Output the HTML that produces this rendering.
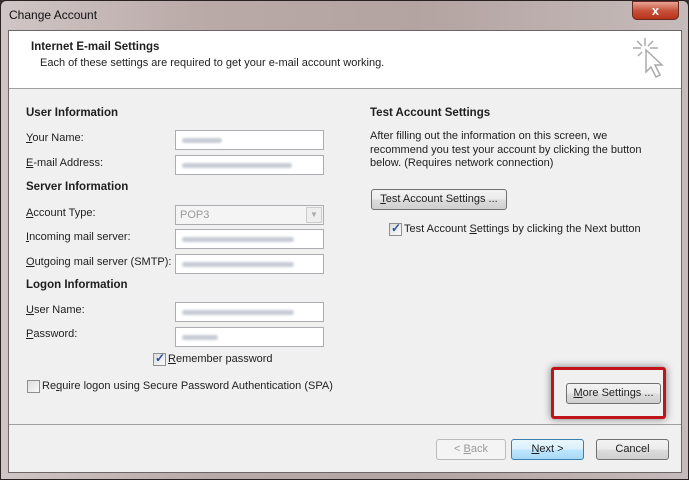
<!DOCTYPE html>
<html><head><style>
*{margin:0;padding:0;box-sizing:border-box}
body{width:689px;height:480px;overflow:hidden;background:#3a3232;font-family:"Liberation Sans",sans-serif;font-size:11px;color:#1e1e1e;position:relative}
.a{position:absolute}
.title{left:0;top:0;width:689px;height:480px;background:linear-gradient(90deg,#cfc6c5 0%,#b9a9a7 30%,#b3a3a1 60%,#c5bbba 100%);border:1px solid #2a2222;border-radius:6px 6px 0 0}
.inner{left:8px;top:30px;width:674px;height:443px;background:#f0f0f0;border:1px solid #6d6666}
.head{left:9px;top:31px;width:672px;height:58px;background:#fff;border-bottom:1px solid #a0a0a0}
.inp{position:absolute;left:175px;width:149px;height:20px;background:#fff;border:1px solid #abadb3}
.blur{position:absolute;left:6px;top:7px;height:5px;background:#c8ccd4;border-radius:3px;filter:blur(1px)}
.lab{position:absolute;left:26px}
.h{position:absolute;font-weight:bold;font-size:11.5px}
.btn{position:absolute;height:21px;border:1px solid #707070;border-radius:3px;background:linear-gradient(#f2f2f2,#ebebeb 50%,#dddddd 51%,#cfcfcf);text-align:center;line-height:19px}
.cb{position:absolute;width:13px;height:13px;border:1px solid #8f8f8f;background:linear-gradient(135deg,#dcdcdc,#fafafa)}
.ck{position:absolute;left:1px;top:-3px;color:#2a4f9c;font-size:12px;font-weight:bold}
u{text-decoration:underline}
</style></head><body>
<div class="a title"></div>
<div class="a" style="left:9px;top:8px;font-size:12px;color:#111">Change Account</div>
<div class="a" style="left:632px;top:1px;width:47px;height:19px;border-radius:0 0 5px 5px;background:linear-gradient(#e8a595,#c7533c 50%,#b8321a);border:1px solid #6b2a20;color:#fff;font-weight:bold;text-align:center;font-size:13px;line-height:17px">x</div>
<div class="a inner"></div>
<div class="a head"></div>
<div class="a" style="left:31px;top:41px;font-weight:bold;font-size:11.5px">Internet E-mail Settings</div>
<div class="a" style="left:40px;top:57px">Each of these settings are required to get your e-mail account working.</div>
<svg class="a" style="left:630px;top:36px" width="40" height="50"><g stroke="#aaa" stroke-width="1.5" fill="none"><path d="M15 2v8M3 12h8M20 12h8M7 5l5 5M23 5l-5 5M8 20l4-4"/><path d="M16 14l0 22 5-5 5 10 4-2-5-10 7 0z" fill="#fff"/></g></svg>

<div class="h" style="left:26px;top:107px">User Information</div>
<div class="lab" style="top:132px"><u>Y</u>our Name:</div>
<div class="inp" style="top:130px"><div class="blur" style="width:40px"></div></div>
<div class="lab" style="top:157px"><u>E</u>-mail Address:</div>
<div class="inp" style="top:155px"><div class="blur" style="width:110px"></div></div>
<div class="h" style="left:26px;top:181px">Server Information</div>
<div class="lab" style="top:207px"><u>A</u>ccount Type:</div>
<div class="inp" style="top:205px;background:#f4f4f4;color:#999;padding:3px 0 0 4px">POP3<div style="position:absolute;right:1px;top:1px;width:16px;height:16px;border:1px solid #ccc;background:#eee;font-size:8px;text-align:center;line-height:14px;color:#aaa">▼</div></div>
<div class="lab" style="top:231px"><u>I</u>ncoming mail server:</div>
<div class="inp" style="top:229px"><div class="blur" style="width:112px"></div></div>
<div class="lab" style="top:256px"><u>O</u>utgoing mail server (SMTP):</div>
<div class="inp" style="top:254px"><div class="blur" style="width:112px"></div></div>
<div class="h" style="left:26px;top:279px">Logon Information</div>
<div class="lab" style="top:304px"><u>U</u>ser Name:</div>
<div class="inp" style="top:302px"><div class="blur" style="width:112px"></div></div>
<div class="lab" style="top:328px"><u>P</u>assword:</div>
<div class="inp" style="top:327px"><div class="blur" style="width:36px"></div></div>
<div class="cb" style="left:153px;top:353px"><span class="ck">✓</span></div>
<div class="a" style="left:168px;top:353px"><u>R</u>emember password</div>
<div class="cb" style="left:27px;top:380px"></div>
<div class="a" style="left:42px;top:380px">Re<u>q</u>uire logon using Secure Password Authentication (SPA)</div>

<div class="h" style="left:370px;top:107px">Test Account Settings</div>
<div class="a" style="left:370px;top:130px;line-height:13.5px">After filling out the information on this screen, we<br>recommend you test your account by clicking the button<br>below. (Requires network connection)</div>
<div class="btn" style="left:371px;top:189px;width:136px"><u>T</u>est Account Settings ...</div>
<div class="cb" style="left:389px;top:223px"><span class="ck">✓</span></div>
<div class="a" style="left:404px;top:223px">Test Account <u>S</u>ettings by clicking the Next button</div>

<div class="a" style="left:551px;top:367px;width:115px;height:52px;border:3px solid #c0141a;border-radius:3px;box-shadow:0 0 8px rgba(0,0,0,.5);background:#f0f0f0"></div>
<div class="btn" style="left:566px;top:383px;width:95px"><u>M</u>ore Settings ...</div>

<div class="a" style="left:9px;top:424px;width:672px;border-top:1px solid #a0a0a0"></div>
<div class="btn" style="left:436px;top:439px;width:70px;color:#9a9a9a;border-color:#bbb;background:#f4f4f4">&lt; <u>B</u>ack</div>
<div class="btn" style="left:511px;top:439px;width:73px;border-color:#3c7fb1;background:linear-gradient(#eaf6fd,#d9f0fc 50%,#bee6fd 51%,#a7d9f5)"><u>N</u>ext &gt;</div>
<div class="btn" style="left:596px;top:439px;width:73px">Cancel</div>
</body></html>
